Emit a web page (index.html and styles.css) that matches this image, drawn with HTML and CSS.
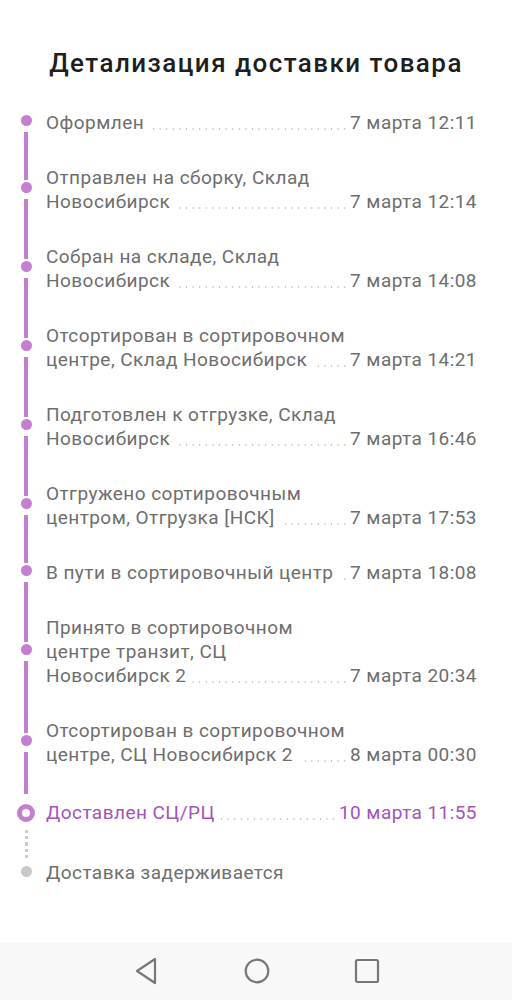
FILE: index.html
```html
<!DOCTYPE html>
<html lang="ru">
<head>
<meta charset="utf-8">
<title>Детализация доставки товара</title>
<link rel="stylesheet" href="styles.css">
</head>
<body>
<div class="screen">
  <main class="content">
    <h1 class="title">Детализация доставки товара</h1>
    <ol class="timeline">
      <li class="item item-first">
        <div class="marker"><span class="seg seg-top"></span><span class="dot"></span><span class="seg seg-bottom"></span></div>
        <div class="body"><div class="desc"><span class="txt">Оформлен</span></div><span class="date">7 марта 12:11</span></div>
      </li>
      <li class="item">
        <div class="marker"><span class="seg seg-top"></span><span class="dot"></span><span class="seg seg-bottom"></span></div>
        <div class="body"><div class="desc"><span class="txt">Отправлен на сборку, Склад Новосибирск</span></div><span class="date">7 марта 12:14</span></div>
      </li>
      <li class="item">
        <div class="marker"><span class="seg seg-top"></span><span class="dot"></span><span class="seg seg-bottom"></span></div>
        <div class="body"><div class="desc"><span class="txt">Собран на складе, Склад Новосибирск</span></div><span class="date">7 марта 14:08</span></div>
      </li>
      <li class="item">
        <div class="marker"><span class="seg seg-top"></span><span class="dot"></span><span class="seg seg-bottom"></span></div>
        <div class="body"><div class="desc"><span class="txt">Отсортирован в сортировочном центре, Склад Новосибирск</span></div><span class="date">7 марта 14:21</span></div>
      </li>
      <li class="item">
        <div class="marker"><span class="seg seg-top"></span><span class="dot"></span><span class="seg seg-bottom"></span></div>
        <div class="body"><div class="desc"><span class="txt">Подготовлен к отгрузке, Склад Новосибирск</span></div><span class="date">7 марта 16:46</span></div>
      </li>
      <li class="item">
        <div class="marker"><span class="seg seg-top"></span><span class="dot"></span><span class="seg seg-bottom"></span></div>
        <div class="body"><div class="desc"><span class="txt">Отгружено сортировочным центром, Отгрузка [НСК]</span></div><span class="date">7 марта 17:53</span></div>
      </li>
      <li class="item">
        <div class="marker"><span class="seg seg-top"></span><span class="dot"></span><span class="seg seg-bottom"></span></div>
        <div class="body"><div class="desc"><span class="txt">В пути в сортировочный центр</span></div><span class="date">7 марта 18:08</span></div>
      </li>
      <li class="item">
        <div class="marker"><span class="seg seg-top"></span><span class="dot"></span><span class="seg seg-bottom"></span></div>
        <div class="body"><div class="desc"><span class="txt">Принято в сортировочном центре транзит, СЦ Новосибирск 2</span></div><span class="date">7 марта 20:34</span></div>
      </li>
      <li class="item">
        <div class="marker"><span class="seg seg-top"></span><span class="dot"></span><span class="seg seg-bottom"></span></div>
        <div class="body"><div class="desc"><span class="txt">Отсортирован в сортировочном центре, СЦ Новосибирск 2</span></div><span class="date">8 марта 00:30</span></div>
      </li>
      <li class="item item-current">
        <div class="marker"><span class="seg seg-top"></span><span class="ring"></span><span class="seg seg-bottom seg-dashed"></span></div>
        <div class="body"><div class="desc"><span class="txt">Доставлен СЦ/РЦ</span></div><span class="date">10 марта 11:55</span></div>
      </li>
      <li class="item item-pending">
        <div class="marker"><span class="seg seg-top seg-dashed"></span><span class="dot dot-gray"></span><span class="seg seg-bottom seg-none"></span></div>
        <div class="body"><div class="desc desc-plain"><span class="txt">Доставка задерживается</span></div></div>
      </li>
    </ol>
  </main>
  <nav class="navbar">
    <svg class="nav-icon" width="26" height="28" viewBox="0 0 26 28" aria-label="Назад">
      <path d="M21 2 L3 14 L21 26 Z" fill="none" stroke="#777" stroke-width="2.2" stroke-linejoin="round"/>
    </svg>
    <svg class="nav-icon" width="26" height="28" viewBox="0 0 26 28" aria-label="Домой">
      <circle cx="13" cy="14" r="11.3" fill="none" stroke="#777" stroke-width="2.2"/>
    </svg>
    <svg class="nav-icon" width="26" height="28" viewBox="0 0 26 28" aria-label="Обзор">
      <rect x="2" y="3" width="22" height="22" rx="1.5" fill="none" stroke="#777" stroke-width="2.2"/>
    </svg>
  </nav>
</div>
</body>
</html>
```
FILE: styles.css
```css
* { box-sizing: border-box; }

html, body {
  margin: 0;
  padding: 0;
  background: #ffffff;
}

body {
  font-family: Roboto, "Noto Sans", "Liberation Sans", sans-serif;
}

.screen {
  display: flex;
  flex-direction: column;
  min-height: 1000px;
}

.content {
  flex: 1;
  padding-top: 48px;
}

.title {
  margin: 0 0 17px;
  font-size: 26px;
  line-height: 30px;
  font-weight: 500;
  letter-spacing: 1.45px;
  color: #1e1e1e;
  text-align: center;
}

.timeline {
  list-style: none;
  margin: 0;
  padding: 0 35px 0 0;
}

.item {
  display: grid;
  grid-template-columns: 46px 1fr;
}

.marker {
  display: flex;
  flex-direction: column;
  align-items: center;
  width: 46px;
  padding-left: 6px;
}

.seg {
  flex: 1;
  width: 4px;
  background: #c47fd1;
}

.seg-top { margin-bottom: 2px; }
.seg-bottom { margin-top: 6px; }

.item-first .seg-top { visibility: hidden; }

.dot {
  flex: none;
  width: 11px;
  height: 11px;
  border-radius: 50%;
  background: #c47fd1;
}

.dot-gray { background: #c9c9c9; }

.ring {
  flex: none;
  width: 18px;
  height: 18px;
  border-radius: 50%;
  border: 5.5px solid #c47fd1;
  background: #ffffff;
}

.item-current .seg-top { margin-bottom: 10px; }
.item-current .seg-bottom { margin-top: 8px; }

.seg-dashed {
  width: 3px;
  background: repeating-linear-gradient(to bottom, #cccccc 0, #cccccc 3px, transparent 3px, transparent 6px);
}

.item-pending .seg-top { margin-bottom: 6px; }
.item-pending .seg-bottom { margin-top: 6px; }
.seg-none { visibility: hidden; }

.body {
  display: flex;
  align-items: flex-end;
  padding: 15.5px 0;
  font-size: 19px;
  line-height: 24px;
  letter-spacing: 0.45px;
  color: #6e6e6e;
}

.item-current .body {
  padding: 18.5px 0 18px;
  color: #a552bb;
}

.item-pending .body {
  padding: 18px 0 15.5px;
}

.desc {
  flex: 1;
  min-width: 0;
  background-image: radial-gradient(circle at 50% 50%, #c2c2c2 0, #c2c2c2 0.6px, rgba(194,194,194,0) 1.1px);
  background-size: 6.6px 4px;
  background-repeat: repeat-x;
  background-position: right 2px bottom 4px;
}

.desc-plain { background: none; }

.txt {
  background: #ffffff;
  padding-right: 6px;
}

.date {
  flex: none;
  white-space: nowrap;
}

.navbar {
  display: flex;
  justify-content: center;
  align-items: center;
  gap: 84px;
  height: 58px;
  background: #f8f8f8;
  padding-left: 2px;
}

.nav-icon { display: block; }
```
